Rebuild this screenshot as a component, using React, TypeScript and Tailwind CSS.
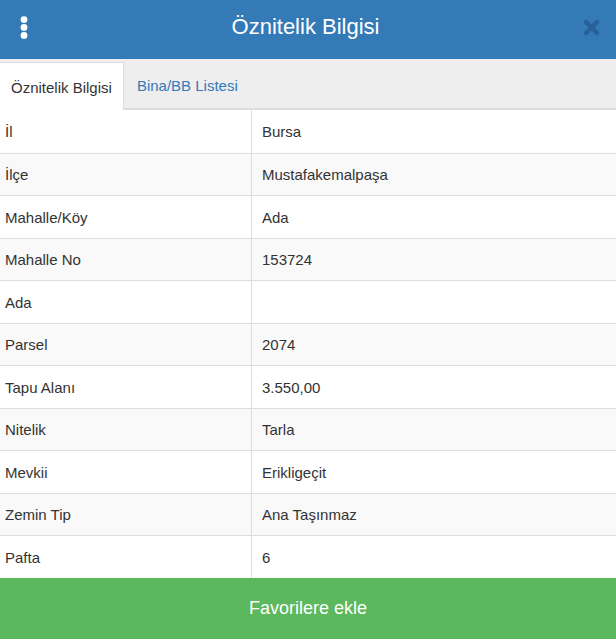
import React from 'react';

const rows: [string, string][] = [
  ['İl', 'Bursa'],
  ['İlçe', 'Mustafakemalpaşa'],
  ['Mahalle/Köy', 'Ada'],
  ['Mahalle No', '153724'],
  ['Ada', ''],
  ['Parsel', '2074'],
  ['Tapu Alanı', '3.550,00'],
  ['Nitelik', 'Tarla'],
  ['Mevkii', 'Erikligeçit'],
  ['Zemin Tip', 'Ana Taşınmaz'],
  ['Pafta', '6'],
];

const App = () => {
  return (
    <div className="w-[616px] h-[639px] flex flex-col bg-white text-[#333] font-['Liberation_Sans',Arial,sans-serif]">
      {/* header */}
      <div className="h-[59px] shrink-0 bg-[#337ab7] flex items-center justify-between pl-5 pr-4 pb-[5px] text-white">
        <svg width="8" height="23" viewBox="0 0 8 23" fill="white">
          <circle cx="4" cy="3.6" r="3.4" />
          <circle cx="4" cy="11.5" r="3.4" />
          <circle cx="4" cy="19.4" r="3.4" />
        </svg>
        <h1 className="text-[22px] leading-none">Öznitelik Bilgisi</h1>
        <svg width="17" height="17" viewBox="0 0 17 17">
          <path d="M3 3 L14 14 M14 3 L3 14" stroke="#28609a" strokeWidth="4.5" strokeLinecap="round" />
        </svg>
      </div>

      {/* tabs */}
      <div className="h-[51px] shrink-0 bg-[#eee] flex items-end border-b-2 border-[#ddd] text-[15px]">
        <div className="h-[48px] -mb-[2px] bg-white border-r border-t border-[#ddd] px-[11px] pt-[4px] flex items-center">
          Öznitelik Bilgisi
        </div>
        <div className="h-[48px] px-[13px] pt-[4px] flex items-center text-[#337ab7]">Bina/BB Listesi</div>
      </div>

      {/* attribute table */}
      <div className="flex-1 flex flex-col text-[15px]">
        {rows.map(([label, value], i) => (
          <div
            key={label}
            className={`flex h-[42.5px] border-t border-[#ddd] first:border-t-0 ${i % 2 === 1 ? 'bg-[#f9f9f9]' : 'bg-white'}`}
          >
            <div className="w-[252px] border-r border-[#ddd] pl-[5px] pt-[2px] flex items-center">{label}</div>
            <div className="flex-1 pl-[10px] pt-[2px] flex items-center">{value}</div>
          </div>
        ))}
      </div>

      <button className="h-[61px] shrink-0 bg-[#5cb85c] text-white text-[18px]">Favorilere ekle</button>
    </div>
  );
};

export default App;
